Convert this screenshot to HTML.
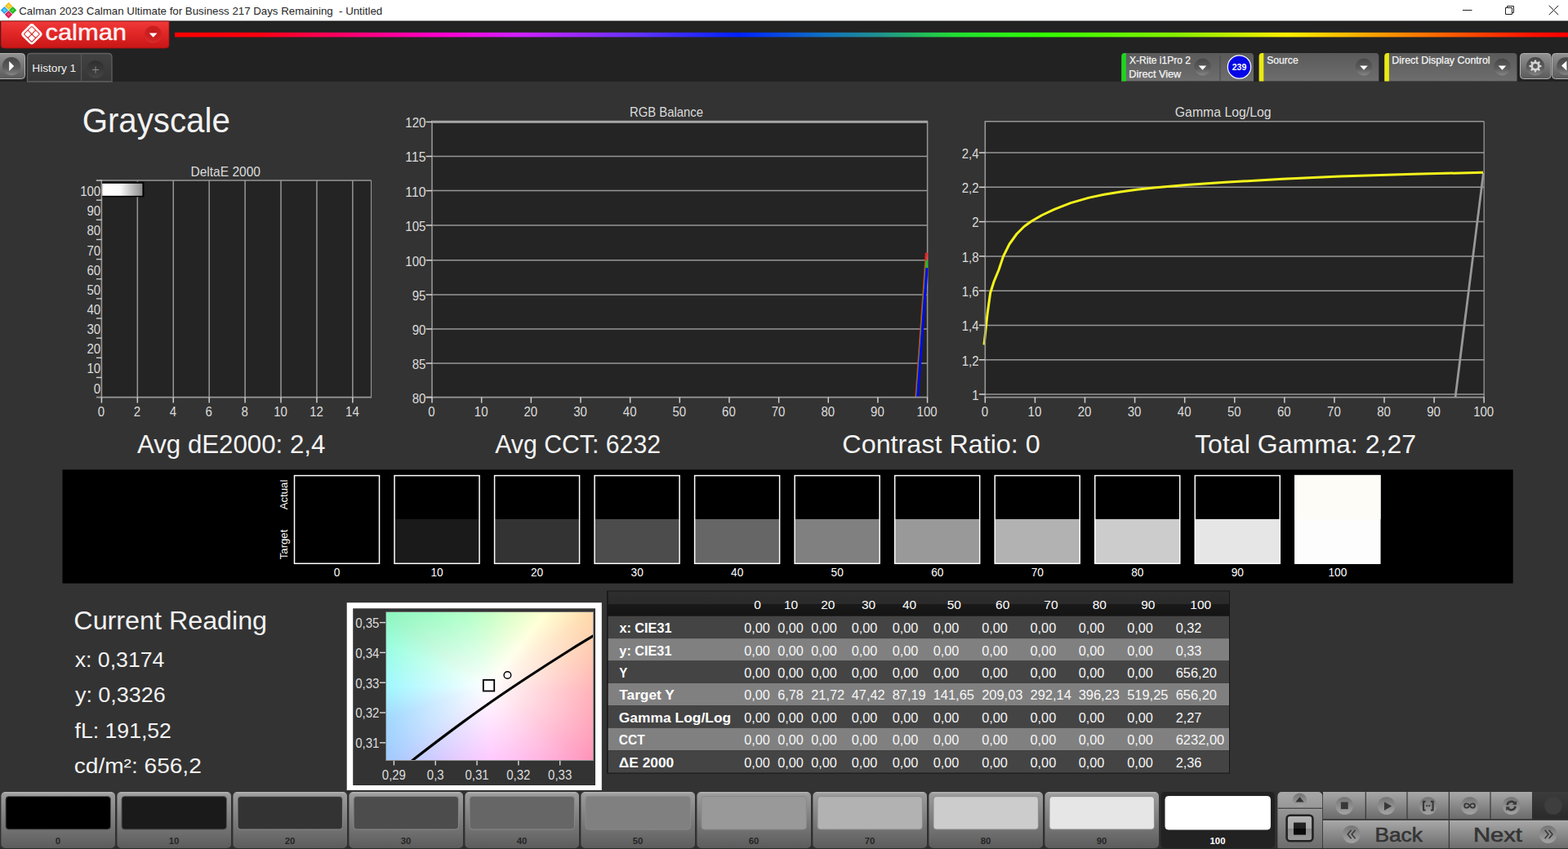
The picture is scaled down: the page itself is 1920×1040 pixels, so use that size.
<!DOCTYPE html>
<html lang="en"><head><meta charset="utf-8"><title>Calman 2023 - Grayscale</title>
<style>
html,body{margin:0;padding:0;background:#333;}
body{width:1920px;height:1040px;overflow:hidden;position:relative;font-family:"Liberation Sans",sans-serif;}
svg{position:absolute;left:0;top:0;display:block;font-family:"Liberation Sans",sans-serif;}
#cie{position:absolute;left:473.3px;top:750.3px;width:252.7px;height:180.7px;background:radial-gradient(circle at 124.5px 89.9px, rgba(255,255,255,1) 0, rgba(255,255,255,0) 175px), conic-gradient(from 0deg at 124.5px 89.9px, rgb(140,255,140) 0.6deg, rgb(202,255,155) 21.5deg, rgb(255,255,184) 38.8deg, rgb(255,212,159) 55.4deg, rgb(255,184,153) 73.2deg, rgb(255,149,160) 94.7deg, rgb(255,134,177) 125.5deg, rgb(255,139,217) 150.2deg, rgb(255,151,255) 178.0deg, rgb(192,167,255) 211.5deg, rgb(148,193,255) 233.3deg, rgb(128,203,255) 251.9deg, rgb(121,245,255) 269.6deg, rgb(120,255,214) 291.6deg, rgb(124,244,181) 305.8deg, rgb(105,250,162) 324.3deg, rgb(108,255,152) 343.4deg, rgb(140,255,140) 360.0deg);}
</style></head><body>
<svg id="main" width="1920" height="1040" viewBox="0 0 1920 1040">
<defs>
<linearGradient id="gRed" x1="0" y1="0" x2="0" y2="1"><stop offset="0" stop-color="#f03a3a"/><stop offset="0.45" stop-color="#e22626"/><stop offset="1" stop-color="#c81616"/></linearGradient>
<radialGradient id="gRedC" cx="0.5" cy="0.35" r="0.7"><stop offset="0" stop-color="#c31a1a"/><stop offset="0.7" stop-color="#d02222"/><stop offset="1" stop-color="#e03535"/></radialGradient>
<linearGradient id="gRain" x1="214" y1="0" x2="1920" y2="0" gradientUnits="userSpaceOnUse">
<stop offset="0" stop-color="#ff0000"/><stop offset="0.06" stop-color="#ff0010"/><stop offset="0.12" stop-color="#ff0066"/><stop offset="0.19" stop-color="#ff00cc"/><stop offset="0.25" stop-color="#cc22ff"/><stop offset="0.33" stop-color="#6633ff"/><stop offset="0.405" stop-color="#0022ff"/><stop offset="0.465" stop-color="#1070c0"/><stop offset="0.505" stop-color="#209090"/><stop offset="0.56" stop-color="#22dd33"/><stop offset="0.625" stop-color="#33ff00"/><stop offset="0.72" stop-color="#88ee00"/><stop offset="0.80" stop-color="#ffee00"/><stop offset="0.88" stop-color="#ff8800"/><stop offset="0.975" stop-color="#ff1100"/><stop offset="1" stop-color="#ff0000"/></linearGradient>
<linearGradient id="gBtn" x1="0" y1="0" x2="0" y2="1"><stop offset="0" stop-color="#929292"/><stop offset="1" stop-color="#5a5a5a"/></linearGradient>
<linearGradient id="gPanel" x1="0" y1="0" x2="0" y2="1"><stop offset="0" stop-color="#5a5a5a"/><stop offset="1" stop-color="#6e6e6e"/></linearGradient>
<linearGradient id="gPlus" x1="0" y1="0" x2="0" y2="1"><stop offset="0" stop-color="#2e2e2e"/><stop offset="1" stop-color="#454545"/></linearGradient>
<linearGradient id="gTab" x1="0" y1="0" x2="0" y2="1"><stop offset="0" stop-color="#424242"/><stop offset="1" stop-color="#363636"/></linearGradient>
<radialGradient id="gDD" cx="0.5" cy="0.3" r="0.75"><stop offset="0" stop-color="#4a4a4a"/><stop offset="0.8" stop-color="#5a5a5a"/><stop offset="1" stop-color="#6a6a6a"/></radialGradient>
<linearGradient id="gDDl" x1="0" y1="0" x2="0" y2="1"><stop offset="0" stop-color="#474747"/><stop offset="0.6" stop-color="#5c5c5c"/><stop offset="1" stop-color="#868686"/></linearGradient>
<linearGradient id="gBar" x1="0" y1="0" x2="1" y2="0"><stop offset="0" stop-color="#ffffff"/><stop offset="0.45" stop-color="#fafafa"/><stop offset="1" stop-color="#8c8c8c"/></linearGradient>
<linearGradient id="gHdr" x1="0" y1="0" x2="0" y2="1"><stop offset="0" stop-color="#2e2e2e"/><stop offset="0.5" stop-color="#2a2a2a"/><stop offset="0.5" stop-color="#191919"/><stop offset="1" stop-color="#141414"/></linearGradient>
<linearGradient id="gBB" x1="0" y1="0" x2="0" y2="1"><stop offset="0" stop-color="#a6a6a6"/><stop offset="0.06" stop-color="#9a9a9a"/><stop offset="1" stop-color="#5c5c5c"/></linearGradient>
<linearGradient id="gBB2" x1="0" y1="0" x2="0" y2="1"><stop offset="0" stop-color="#a8a8a8"/><stop offset="1" stop-color="#6a6a6a"/></linearGradient>
<linearGradient id="gBBc" x1="0" y1="0" x2="0" y2="1"><stop offset="0" stop-color="#747474"/><stop offset="1" stop-color="#a4a4a4"/></linearGradient>
<linearGradient id="gBBd" x1="0" y1="0" x2="0" y2="1"><stop offset="0" stop-color="#3c3c3c"/><stop offset="1" stop-color="#2a2a2a"/></linearGradient>
<linearGradient id="gSq" x1="0" y1="0" x2="0" y2="1"><stop offset="0" stop-color="#b4b4b4"/><stop offset="0.5" stop-color="#a8a8a8"/><stop offset="0.5" stop-color="#8c8c8c"/><stop offset="1" stop-color="#9a9a9a"/></linearGradient>
</defs>
<rect x="0.00" y="0.00" width="1920.00" height="1040.00" fill="#333333"/>
<rect x="0.00" y="0.00" width="1920.00" height="26.00" fill="#ffffff"/>
<rect x="0.00" y="26.00" width="1920.00" height="74.00" fill="#222222"/>
<line x1="0.00" y1="26.00" x2="1920.00" y2="26.00" stroke="#141414" stroke-width="1.00"/>
<path d="M10.60,2.70 l4.70,4.70 l-4.70,4.70 l-4.70,-4.70Z" fill="#f2c21a"/><path d="M10.60,5.40 l2.20,2.20 l-2.20,2.20 l-2.20,-2.20Z" fill="#f8d648"/><path d="M5.40,7.90 l4.70,4.70 l-4.70,4.70 l-4.70,-4.70Z" fill="#2aa6ea"/><path d="M5.60,10.40 l2.20,2.20 l-2.20,2.20 l-2.20,-2.20Z" fill="#5fd0f6"/><path d="M15.60,7.90 l4.70,4.70 l-4.70,4.70 l-4.70,-4.70Z" fill="#22b422"/><path d="M15.40,10.40 l2.20,2.20 l-2.20,2.20 l-2.20,-2.20Z" fill="#40dc40"/><path d="M10.50,13.00 l4.70,4.70 l-4.70,4.70 l-4.70,-4.70Z" fill="#d81e56"/><path d="M10.50,15.30 l2.20,2.20 l-2.20,2.20 l-2.20,-2.20Z" fill="#f04a7a"/>
<text x="23.23" y="18.00" font-size="12.80" textLength="444.93" lengthAdjust="spacingAndGlyphs" fill="#262626" style="white-space:pre">Calman 2023 Calman Ultimate for Business 217 Days Remaining  - Untitled</text>
<line x1="1791.00" y1="12.50" x2="1802.50" y2="12.50" stroke="#222" stroke-width="1.00"/>
<path d="M1843.5,9.5 h8 v8 h-8Z M1845.5,9.5 v-2 h8 v8 h-2" fill="none" stroke="#222" stroke-width="1"/>
<path d="M1896.8,6.8 L1908.2,18.2 M1908.2,6.8 L1896.8,18.2" stroke="#222" stroke-width="1.0" fill="none"/>
<path d="M1,26 H207 V55 Q207,59 203,59 H5 Q1,59 1,55Z" fill="url(#gRed)" stroke="#9c1010" stroke-width="0.8"/>
<g transform="translate(38.9,41.8) rotate(45) scale(1.06)"><rect x="-8.2" y="-8.2" width="16.4" height="16.4" rx="2.6" fill="none" stroke="#ffffff" stroke-width="2.5"/><rect x="-6.0" y="-6.0" width="5.5" height="5.5" rx="0.8" fill="#ffffff"/><rect x="0.5" y="-6.0" width="5.5" height="5.5" rx="0.8" fill="#ffffff"/><rect x="-6.0" y="0.5" width="5.5" height="5.5" rx="0.8" fill="#ffffff"/><rect x="0.5" y="0.5" width="5.5" height="5.5" rx="0.8" fill="#ffffff"/></g>
<text x="55.49" y="49.30" font-size="27.80" textLength="99.52" lengthAdjust="spacingAndGlyphs" fill="#fff2f2" stroke="#fff2f2" stroke-width="0.45" stroke-linejoin="round">calman</text>
<circle cx="187.5" cy="42" r="10.6" fill="url(#gRedC)"/>
<path d="M182.7,40.4 h9.8 l-4.9,5.4Z" fill="#ffffff"/>
<rect x="214.00" y="39.80" width="1706.00" height="5.60" fill="url(#gRain)"/>
<path d="M-2,65.5 H26.5 Q30.5,65.5 30.5,69.5 V92.5 Q30.5,96.5 26.5,96.5 H-2Z" fill="url(#gBtn)" stroke="#b0b0b0" stroke-width="1"/>
<circle cx="14" cy="81.2" r="11.2" fill="url(#gDDl)"/>
<path d="M11.2,75 L17.2,81 L11.2,87Z" fill="#ffffff"/>
<path d="M33.5,100 V70 Q33.5,65.5 38,65.5 H132.5 Q137,65.5 137,70 V100Z" fill="url(#gTab)" stroke="#606060" stroke-width="1.3"/>
<line x1="99.50" y1="66.00" x2="99.50" y2="100.00" stroke="#5a5a5a" stroke-width="1.00"/>
<text x="39.28" y="88.30" font-size="13.50" textLength="53.89" lengthAdjust="spacingAndGlyphs" fill="#f0f0f0">History 1</text>
<circle cx="117" cy="85" r="10.8" fill="url(#gPlus)"/>
<path d="M113,85.5 h8 M117,81.5 v8" stroke="#8a8a8a" stroke-width="1" fill="none"/>
<path d="M1373.3,99.5 V69 Q1373.3,65 1377.3,65 H1531.0 Q1535.0,65 1535.0,69 V99.5Z" fill="url(#gPanel)"/>
<path d="M1373.3,99.5 V69 Q1373.3,65 1377.3,65 H1378.9 V99.5Z" fill="#1fd31f"/>
<text x="1383.03" y="78.30" font-size="12.70" textLength="74.88" lengthAdjust="spacingAndGlyphs" fill="#f4f4f4" stroke="#f4f4f4" stroke-width="0.25">X-Rite i1Pro 2</text>
<text x="1382.26" y="94.90" font-size="12.70" textLength="64.01" lengthAdjust="spacingAndGlyphs" fill="#f4f4f4" stroke="#f4f4f4" stroke-width="0.25">Direct View</text>
<circle cx="1472.5" cy="82" r="10.4" fill="url(#gDDl)"/>
<path d="M1467.7,80.6 h9.6 l-4.8,5.2Z" fill="#ffffff"/>
<line x1="1494.00" y1="68.00" x2="1494.00" y2="99.50" stroke="#484848" stroke-width="1.00"/>
<circle cx="1517.5" cy="82" r="14.2" fill="#0505e6" stroke="#ffffff" stroke-width="1.2"/>
<text x="1517.50" y="86.00" font-size="11.50" text-anchor="middle" textLength="17.50" lengthAdjust="spacingAndGlyphs" font-weight="bold" fill="#ffffff">239</text>
<path d="M1541.7,99.5 V69 Q1541.7,65 1545.7,65 H1684.3 Q1688.3,65 1688.3,69 V99.5Z" fill="url(#gPanel)"/>
<path d="M1541.7,99.5 V69 Q1541.7,65 1545.7,65 H1547.3 V99.5Z" fill="#eaea10"/>
<text x="1551.15" y="78.30" font-size="12.70" textLength="38.59" lengthAdjust="spacingAndGlyphs" fill="#f4f4f4" stroke="#f4f4f4" stroke-width="0.25">Source</text>
<circle cx="1670.0" cy="82" r="10.4" fill="url(#gDDl)"/>
<path d="M1665.2,80.6 h9.6 l-4.8,5.2Z" fill="#ffffff"/>
<path d="M1695.3,99.5 V69 Q1695.3,65 1699.3,65 H1853.5 Q1857.5,65 1857.5,69 V99.5Z" fill="url(#gPanel)"/>
<path d="M1695.3,99.5 V69 Q1695.3,65 1699.3,65 H1700.9 V99.5Z" fill="#eaea10"/>
<text x="1704.28" y="78.30" font-size="12.70" textLength="120.35" lengthAdjust="spacingAndGlyphs" fill="#f4f4f4" stroke="#f4f4f4" stroke-width="0.25">Direct Display Control</text>
<circle cx="1839.5" cy="82" r="10.4" fill="url(#gDDl)"/>
<path d="M1834.7,80.6 h9.6 l-4.8,5.2Z" fill="#ffffff"/>
<rect x="1861.50" y="65.50" width="37.50" height="31.00" rx="4.00" fill="url(#gBtn)" stroke="#b0b0b0" stroke-width="1"/>
<circle cx="1880" cy="81.3" r="11.2" fill="url(#gDDl)"/>
<path d="M1884.40,79.10 L1887.60,80.20 L1887.60,81.80 L1884.40,82.90 Z" fill="#d4d4d4"/><path d="M1884.45,82.77 L1885.94,85.81 L1884.81,86.94 L1881.77,85.45 Z" fill="#d4d4d4"/><path d="M1881.90,85.40 L1880.80,88.60 L1879.20,88.60 L1878.10,85.40 Z" fill="#d4d4d4"/><path d="M1878.23,85.45 L1875.19,86.94 L1874.06,85.81 L1875.55,82.77 Z" fill="#d4d4d4"/><path d="M1875.60,82.90 L1872.40,81.80 L1872.40,80.20 L1875.60,79.10 Z" fill="#d4d4d4"/><path d="M1875.55,79.23 L1874.06,76.19 L1875.19,75.06 L1878.23,76.55 Z" fill="#d4d4d4"/><path d="M1878.10,76.60 L1879.20,73.40 L1880.80,73.40 L1881.90,76.60 Z" fill="#d4d4d4"/><path d="M1881.77,76.55 L1884.81,75.06 L1885.94,76.19 L1884.45,79.23 Z" fill="#d4d4d4"/>
<circle cx="1880" cy="81" r="4.1" fill="none" stroke="#d4d4d4" stroke-width="2.3"/>
<rect x="1900.50" y="65.50" width="30.00" height="31.00" rx="4.00" fill="url(#gBtn)" stroke="#b0b0b0" stroke-width="1"/>
<circle cx="1917" cy="81" r="10.8" fill="url(#gDDl)"/>
<path d="M1918.4,74.5 L1912,80.5 L1918.4,86.5Z" fill="#ffffff"/>
<text x="100.68" y="161.80" font-size="42.80" textLength="181.11" lengthAdjust="spacingAndGlyphs" fill="#f2f2f2">Grayscale</text>
<rect x="124.40" y="221.00" width="330.10" height="265.60" fill="#242424"/>
<line x1="168.32" y1="221.00" x2="168.32" y2="486.60" stroke="#979797" stroke-width="1.50"/>
<line x1="212.24" y1="221.00" x2="212.24" y2="486.60" stroke="#979797" stroke-width="1.50"/>
<line x1="256.16" y1="221.00" x2="256.16" y2="486.60" stroke="#979797" stroke-width="1.50"/>
<line x1="300.08" y1="221.00" x2="300.08" y2="486.60" stroke="#979797" stroke-width="1.50"/>
<line x1="344.00" y1="221.00" x2="344.00" y2="486.60" stroke="#979797" stroke-width="1.50"/>
<line x1="387.92" y1="221.00" x2="387.92" y2="486.60" stroke="#979797" stroke-width="1.50"/>
<line x1="431.84" y1="221.00" x2="431.84" y2="486.60" stroke="#979797" stroke-width="1.50"/>
<line x1="124.40" y1="221.00" x2="454.50" y2="221.00" stroke="#979797" stroke-width="1.50"/>
<line x1="454.50" y1="221.00" x2="454.50" y2="486.60" stroke="#979797" stroke-width="1.10"/>
<line x1="124.40" y1="220.30" x2="124.40" y2="487.40" stroke="#979797" stroke-width="1.60"/>
<line x1="117.90" y1="486.60" x2="455.00" y2="486.60" stroke="#979797" stroke-width="1.75"/>
<line x1="117.90" y1="221.00" x2="124.40" y2="221.00" stroke="#d0d0d0" stroke-width="1.40"/>
<text x="123.20" y="240.07" font-size="15.70" text-anchor="end" textLength="25.05" lengthAdjust="spacingAndGlyphs" fill="#dcdcdc">100</text>
<line x1="117.90" y1="245.15" x2="124.40" y2="245.15" stroke="#d0d0d0" stroke-width="1.40"/>
<text x="123.20" y="264.22" font-size="15.70" text-anchor="end" textLength="16.70" lengthAdjust="spacingAndGlyphs" fill="#dcdcdc">90</text>
<line x1="117.90" y1="269.29" x2="124.40" y2="269.29" stroke="#d0d0d0" stroke-width="1.40"/>
<text x="123.20" y="288.36" font-size="15.70" text-anchor="end" textLength="16.70" lengthAdjust="spacingAndGlyphs" fill="#dcdcdc">80</text>
<line x1="117.90" y1="293.44" x2="124.40" y2="293.44" stroke="#d0d0d0" stroke-width="1.40"/>
<text x="123.20" y="312.51" font-size="15.70" text-anchor="end" textLength="16.70" lengthAdjust="spacingAndGlyphs" fill="#dcdcdc">70</text>
<line x1="117.90" y1="317.58" x2="124.40" y2="317.58" stroke="#d0d0d0" stroke-width="1.40"/>
<text x="123.20" y="336.65" font-size="15.70" text-anchor="end" textLength="16.70" lengthAdjust="spacingAndGlyphs" fill="#dcdcdc">60</text>
<line x1="117.90" y1="341.73" x2="124.40" y2="341.73" stroke="#d0d0d0" stroke-width="1.40"/>
<text x="123.20" y="360.80" font-size="15.70" text-anchor="end" textLength="16.70" lengthAdjust="spacingAndGlyphs" fill="#dcdcdc">50</text>
<line x1="117.90" y1="365.87" x2="124.40" y2="365.87" stroke="#d0d0d0" stroke-width="1.40"/>
<text x="123.20" y="384.95" font-size="15.70" text-anchor="end" textLength="16.70" lengthAdjust="spacingAndGlyphs" fill="#dcdcdc">40</text>
<line x1="117.90" y1="390.02" x2="124.40" y2="390.02" stroke="#d0d0d0" stroke-width="1.40"/>
<text x="123.20" y="409.09" font-size="15.70" text-anchor="end" textLength="16.70" lengthAdjust="spacingAndGlyphs" fill="#dcdcdc">30</text>
<line x1="117.90" y1="414.16" x2="124.40" y2="414.16" stroke="#d0d0d0" stroke-width="1.40"/>
<text x="123.20" y="433.24" font-size="15.70" text-anchor="end" textLength="16.70" lengthAdjust="spacingAndGlyphs" fill="#dcdcdc">20</text>
<line x1="117.90" y1="438.31" x2="124.40" y2="438.31" stroke="#d0d0d0" stroke-width="1.40"/>
<text x="123.20" y="457.38" font-size="15.70" text-anchor="end" textLength="16.70" lengthAdjust="spacingAndGlyphs" fill="#dcdcdc">10</text>
<line x1="117.90" y1="462.45" x2="124.40" y2="462.45" stroke="#d0d0d0" stroke-width="1.40"/>
<text x="123.20" y="481.53" font-size="15.70" text-anchor="end" textLength="8.35" lengthAdjust="spacingAndGlyphs" fill="#dcdcdc">0</text>
<line x1="124.40" y1="486.60" x2="124.40" y2="493.60" stroke="#d0d0d0" stroke-width="1.50"/>
<text x="124.00" y="510.40" font-size="15.70" text-anchor="middle" textLength="8.35" lengthAdjust="spacingAndGlyphs" fill="#dcdcdc">0</text>
<line x1="168.32" y1="486.60" x2="168.32" y2="493.60" stroke="#d0d0d0" stroke-width="1.50"/>
<text x="167.92" y="510.40" font-size="15.70" text-anchor="middle" textLength="8.35" lengthAdjust="spacingAndGlyphs" fill="#dcdcdc">2</text>
<line x1="212.24" y1="486.60" x2="212.24" y2="493.60" stroke="#d0d0d0" stroke-width="1.50"/>
<text x="211.84" y="510.40" font-size="15.70" text-anchor="middle" textLength="8.35" lengthAdjust="spacingAndGlyphs" fill="#dcdcdc">4</text>
<line x1="256.16" y1="486.60" x2="256.16" y2="493.60" stroke="#d0d0d0" stroke-width="1.50"/>
<text x="255.76" y="510.40" font-size="15.70" text-anchor="middle" textLength="8.35" lengthAdjust="spacingAndGlyphs" fill="#dcdcdc">6</text>
<line x1="300.08" y1="486.60" x2="300.08" y2="493.60" stroke="#d0d0d0" stroke-width="1.50"/>
<text x="299.68" y="510.40" font-size="15.70" text-anchor="middle" textLength="8.35" lengthAdjust="spacingAndGlyphs" fill="#dcdcdc">8</text>
<line x1="344.00" y1="486.60" x2="344.00" y2="493.60" stroke="#d0d0d0" stroke-width="1.50"/>
<text x="343.60" y="510.40" font-size="15.70" text-anchor="middle" textLength="16.70" lengthAdjust="spacingAndGlyphs" fill="#dcdcdc">10</text>
<line x1="387.92" y1="486.60" x2="387.92" y2="493.60" stroke="#d0d0d0" stroke-width="1.50"/>
<text x="387.52" y="510.40" font-size="15.70" text-anchor="middle" textLength="16.70" lengthAdjust="spacingAndGlyphs" fill="#dcdcdc">12</text>
<line x1="431.84" y1="486.60" x2="431.84" y2="493.60" stroke="#d0d0d0" stroke-width="1.50"/>
<text x="431.44" y="510.40" font-size="15.70" text-anchor="middle" textLength="16.70" lengthAdjust="spacingAndGlyphs" fill="#dcdcdc">14</text>
<rect x="125.20" y="222.70" width="51.20" height="18.60" fill="#000000"/>
<rect x="125.20" y="224.80" width="49.20" height="15.00" fill="url(#gBar)"/>
<text x="233.53" y="215.60" font-size="16.20" textLength="85.38" lengthAdjust="spacingAndGlyphs" fill="#dcdcdc">DeltaE 2000</text>
<rect x="529.00" y="149.40" width="606.60" height="337.20" fill="#242424"/>
<line x1="529.00" y1="191.50" x2="1135.60" y2="191.50" stroke="#979797" stroke-width="1.50"/>
<line x1="529.00" y1="233.60" x2="1135.60" y2="233.60" stroke="#979797" stroke-width="1.50"/>
<line x1="529.00" y1="276.00" x2="1135.60" y2="276.00" stroke="#979797" stroke-width="1.50"/>
<line x1="529.00" y1="318.80" x2="1135.60" y2="318.80" stroke="#979797" stroke-width="1.50"/>
<line x1="529.00" y1="361.00" x2="1135.60" y2="361.00" stroke="#979797" stroke-width="1.50"/>
<line x1="529.00" y1="403.00" x2="1135.60" y2="403.00" stroke="#979797" stroke-width="1.50"/>
<line x1="529.00" y1="445.00" x2="1135.60" y2="445.00" stroke="#979797" stroke-width="1.50"/>
<line x1="528.20" y1="149.20" x2="1136.20" y2="149.20" stroke="#a6a6a6" stroke-width="3.00"/>
<line x1="1135.60" y1="149.40" x2="1135.60" y2="486.60" stroke="#979797" stroke-width="1.50"/>
<clipPath id="cpR"><rect x="529.0" y="149.4" width="607.6" height="337.2"/></clipPath>
<g clip-path="url(#cpR)" fill="none"><line x1="1073.9" y1="1161.0" x2="1134.4" y2="309.6" stroke="#ee2222" stroke-width="3"/><line x1="1074.4" y1="1161.0" x2="1134.7" y2="318.8" stroke="#22bb22" stroke-width="3"/><line x1="1074.9" y1="1161.0" x2="1135.0" y2="328.1" stroke="#0808e8" stroke-width="3.2"/></g>
<line x1="529.00" y1="147.80" x2="529.00" y2="487.40" stroke="#979797" stroke-width="1.60"/>
<line x1="521.50" y1="486.60" x2="1136.30" y2="486.60" stroke="#979797" stroke-width="1.75"/>
<line x1="521.50" y1="149.40" x2="529.00" y2="149.40" stroke="#d8d8d8" stroke-width="1.50"/>
<text x="521.40" y="156.30" font-size="15.70" text-anchor="end" textLength="25.05" lengthAdjust="spacingAndGlyphs" fill="#dcdcdc">120</text>
<line x1="521.50" y1="191.50" x2="529.00" y2="191.50" stroke="#d8d8d8" stroke-width="1.50"/>
<text x="521.40" y="198.40" font-size="15.70" text-anchor="end" textLength="25.05" lengthAdjust="spacingAndGlyphs" fill="#dcdcdc">115</text>
<line x1="521.50" y1="233.60" x2="529.00" y2="233.60" stroke="#d8d8d8" stroke-width="1.50"/>
<text x="521.40" y="240.50" font-size="15.70" text-anchor="end" textLength="25.05" lengthAdjust="spacingAndGlyphs" fill="#dcdcdc">110</text>
<line x1="521.50" y1="276.00" x2="529.00" y2="276.00" stroke="#d8d8d8" stroke-width="1.50"/>
<text x="521.40" y="282.90" font-size="15.70" text-anchor="end" textLength="25.05" lengthAdjust="spacingAndGlyphs" fill="#dcdcdc">105</text>
<line x1="521.50" y1="318.80" x2="529.00" y2="318.80" stroke="#d8d8d8" stroke-width="1.50"/>
<text x="521.40" y="325.70" font-size="15.70" text-anchor="end" textLength="25.05" lengthAdjust="spacingAndGlyphs" fill="#dcdcdc">100</text>
<line x1="521.50" y1="361.00" x2="529.00" y2="361.00" stroke="#d8d8d8" stroke-width="1.50"/>
<text x="521.40" y="367.90" font-size="15.70" text-anchor="end" textLength="16.70" lengthAdjust="spacingAndGlyphs" fill="#dcdcdc">95</text>
<line x1="521.50" y1="403.00" x2="529.00" y2="403.00" stroke="#d8d8d8" stroke-width="1.50"/>
<text x="521.40" y="409.90" font-size="15.70" text-anchor="end" textLength="16.70" lengthAdjust="spacingAndGlyphs" fill="#dcdcdc">90</text>
<line x1="521.50" y1="445.00" x2="529.00" y2="445.00" stroke="#d8d8d8" stroke-width="1.50"/>
<text x="521.40" y="451.90" font-size="15.70" text-anchor="end" textLength="16.70" lengthAdjust="spacingAndGlyphs" fill="#dcdcdc">85</text>
<line x1="521.50" y1="486.60" x2="529.00" y2="486.60" stroke="#d8d8d8" stroke-width="1.50"/>
<text x="521.40" y="493.50" font-size="15.70" text-anchor="end" textLength="16.70" lengthAdjust="spacingAndGlyphs" fill="#dcdcdc">80</text>
<line x1="529.00" y1="486.60" x2="529.00" y2="493.60" stroke="#d0d0d0" stroke-width="1.50"/>
<text x="528.50" y="510.40" font-size="15.70" text-anchor="middle" textLength="8.35" lengthAdjust="spacingAndGlyphs" fill="#dcdcdc">0</text>
<line x1="589.66" y1="486.60" x2="589.66" y2="493.60" stroke="#d0d0d0" stroke-width="1.50"/>
<text x="589.16" y="510.40" font-size="15.70" text-anchor="middle" textLength="16.70" lengthAdjust="spacingAndGlyphs" fill="#dcdcdc">10</text>
<line x1="650.32" y1="486.60" x2="650.32" y2="493.60" stroke="#d0d0d0" stroke-width="1.50"/>
<text x="649.82" y="510.40" font-size="15.70" text-anchor="middle" textLength="16.70" lengthAdjust="spacingAndGlyphs" fill="#dcdcdc">20</text>
<line x1="710.98" y1="486.60" x2="710.98" y2="493.60" stroke="#d0d0d0" stroke-width="1.50"/>
<text x="710.48" y="510.40" font-size="15.70" text-anchor="middle" textLength="16.70" lengthAdjust="spacingAndGlyphs" fill="#dcdcdc">30</text>
<line x1="771.64" y1="486.60" x2="771.64" y2="493.60" stroke="#d0d0d0" stroke-width="1.50"/>
<text x="771.14" y="510.40" font-size="15.70" text-anchor="middle" textLength="16.70" lengthAdjust="spacingAndGlyphs" fill="#dcdcdc">40</text>
<line x1="832.30" y1="486.60" x2="832.30" y2="493.60" stroke="#d0d0d0" stroke-width="1.50"/>
<text x="831.80" y="510.40" font-size="15.70" text-anchor="middle" textLength="16.70" lengthAdjust="spacingAndGlyphs" fill="#dcdcdc">50</text>
<line x1="892.96" y1="486.60" x2="892.96" y2="493.60" stroke="#d0d0d0" stroke-width="1.50"/>
<text x="892.46" y="510.40" font-size="15.70" text-anchor="middle" textLength="16.70" lengthAdjust="spacingAndGlyphs" fill="#dcdcdc">60</text>
<line x1="953.62" y1="486.60" x2="953.62" y2="493.60" stroke="#d0d0d0" stroke-width="1.50"/>
<text x="953.12" y="510.40" font-size="15.70" text-anchor="middle" textLength="16.70" lengthAdjust="spacingAndGlyphs" fill="#dcdcdc">70</text>
<line x1="1014.28" y1="486.60" x2="1014.28" y2="493.60" stroke="#d0d0d0" stroke-width="1.50"/>
<text x="1013.78" y="510.40" font-size="15.70" text-anchor="middle" textLength="16.70" lengthAdjust="spacingAndGlyphs" fill="#dcdcdc">80</text>
<line x1="1074.94" y1="486.60" x2="1074.94" y2="493.60" stroke="#d0d0d0" stroke-width="1.50"/>
<text x="1074.44" y="510.40" font-size="15.70" text-anchor="middle" textLength="16.70" lengthAdjust="spacingAndGlyphs" fill="#dcdcdc">90</text>
<line x1="1135.60" y1="486.60" x2="1135.60" y2="493.60" stroke="#d0d0d0" stroke-width="1.50"/>
<text x="1135.10" y="510.40" font-size="15.70" text-anchor="middle" textLength="25.05" lengthAdjust="spacingAndGlyphs" fill="#dcdcdc">100</text>
<text x="771.08" y="142.60" font-size="16.20" textLength="89.88" lengthAdjust="spacingAndGlyphs" fill="#dcdcdc">RGB Balance</text>
<rect x="1206.30" y="148.80" width="610.90" height="337.80" fill="#242424"/>
<line x1="1206.30" y1="483.00" x2="1817.20" y2="483.00" stroke="#979797" stroke-width="1.50"/>
<line x1="1206.30" y1="440.72" x2="1817.20" y2="440.72" stroke="#979797" stroke-width="1.50"/>
<line x1="1206.30" y1="398.44" x2="1817.20" y2="398.44" stroke="#979797" stroke-width="1.50"/>
<line x1="1206.30" y1="356.16" x2="1817.20" y2="356.16" stroke="#979797" stroke-width="1.50"/>
<line x1="1206.30" y1="313.88" x2="1817.20" y2="313.88" stroke="#979797" stroke-width="1.50"/>
<line x1="1206.30" y1="271.60" x2="1817.20" y2="271.60" stroke="#979797" stroke-width="1.50"/>
<line x1="1206.30" y1="229.32" x2="1817.20" y2="229.32" stroke="#979797" stroke-width="1.50"/>
<line x1="1206.30" y1="187.04" x2="1817.20" y2="187.04" stroke="#979797" stroke-width="1.50"/>
<line x1="1206.30" y1="148.80" x2="1817.20" y2="148.80" stroke="#979797" stroke-width="1.50"/>
<line x1="1817.20" y1="148.80" x2="1817.20" y2="486.60" stroke="#979797" stroke-width="1.30"/>
<line x1="1782.00" y1="487.00" x2="1816.40" y2="212.00" stroke="#989898" stroke-width="2.80"/>
<polyline points="1205.0,422.3 1209.0,385.0 1212.6,359.0 1217.0,345.0 1223.0,330.5 1228.6,313.8 1236.0,299.0 1245.0,286.5 1254.0,277.5 1263.0,271.0 1276.0,263.5 1291.2,256.3 1311.0,248.6 1333.6,242.1 1352.0,238.2 1372.0,235.1 1392.0,232.3 1412.4,230.0 1452.8,226.4 1500.0,223.3 1570.0,219.2 1641.3,215.9 1730.0,213.2 1816.0,211.3" fill="none" stroke="#f4f41c" stroke-width="3" stroke-linejoin="round" stroke-linecap="butt"/>
<line x1="1206.30" y1="148.10" x2="1206.30" y2="487.40" stroke="#979797" stroke-width="1.60"/>
<line x1="1205.50" y1="486.60" x2="1817.80" y2="486.60" stroke="#979797" stroke-width="1.75"/>
<line x1="1198.80" y1="483.00" x2="1206.30" y2="483.00" stroke="#d8d8d8" stroke-width="1.50"/>
<text x="1198.60" y="489.80" font-size="15.70" text-anchor="end" textLength="8.35" lengthAdjust="spacingAndGlyphs" fill="#dcdcdc">1</text>
<line x1="1198.80" y1="440.72" x2="1206.30" y2="440.72" stroke="#d8d8d8" stroke-width="1.50"/>
<text x="1198.60" y="447.52" font-size="15.70" text-anchor="end" textLength="20.80" lengthAdjust="spacingAndGlyphs" fill="#dcdcdc">1,2</text>
<line x1="1198.80" y1="398.44" x2="1206.30" y2="398.44" stroke="#d8d8d8" stroke-width="1.50"/>
<text x="1198.60" y="405.24" font-size="15.70" text-anchor="end" textLength="20.80" lengthAdjust="spacingAndGlyphs" fill="#dcdcdc">1,4</text>
<line x1="1198.80" y1="356.16" x2="1206.30" y2="356.16" stroke="#d8d8d8" stroke-width="1.50"/>
<text x="1198.60" y="362.96" font-size="15.70" text-anchor="end" textLength="20.80" lengthAdjust="spacingAndGlyphs" fill="#dcdcdc">1,6</text>
<line x1="1198.80" y1="313.88" x2="1206.30" y2="313.88" stroke="#d8d8d8" stroke-width="1.50"/>
<text x="1198.60" y="320.68" font-size="15.70" text-anchor="end" textLength="20.80" lengthAdjust="spacingAndGlyphs" fill="#dcdcdc">1,8</text>
<line x1="1198.80" y1="271.60" x2="1206.30" y2="271.60" stroke="#d8d8d8" stroke-width="1.50"/>
<text x="1198.60" y="278.40" font-size="15.70" text-anchor="end" textLength="8.35" lengthAdjust="spacingAndGlyphs" fill="#dcdcdc">2</text>
<line x1="1198.80" y1="229.32" x2="1206.30" y2="229.32" stroke="#d8d8d8" stroke-width="1.50"/>
<text x="1198.60" y="236.12" font-size="15.70" text-anchor="end" textLength="20.80" lengthAdjust="spacingAndGlyphs" fill="#dcdcdc">2,2</text>
<line x1="1198.80" y1="187.04" x2="1206.30" y2="187.04" stroke="#d8d8d8" stroke-width="1.50"/>
<text x="1198.60" y="193.84" font-size="15.70" text-anchor="end" textLength="20.80" lengthAdjust="spacingAndGlyphs" fill="#dcdcdc">2,4</text>
<line x1="1206.30" y1="486.60" x2="1206.30" y2="493.60" stroke="#d0d0d0" stroke-width="1.50"/>
<text x="1205.80" y="510.40" font-size="15.70" text-anchor="middle" textLength="8.35" lengthAdjust="spacingAndGlyphs" fill="#dcdcdc">0</text>
<line x1="1267.39" y1="486.60" x2="1267.39" y2="493.60" stroke="#d0d0d0" stroke-width="1.50"/>
<text x="1266.89" y="510.40" font-size="15.70" text-anchor="middle" textLength="16.70" lengthAdjust="spacingAndGlyphs" fill="#dcdcdc">10</text>
<line x1="1328.48" y1="486.60" x2="1328.48" y2="493.60" stroke="#d0d0d0" stroke-width="1.50"/>
<text x="1327.98" y="510.40" font-size="15.70" text-anchor="middle" textLength="16.70" lengthAdjust="spacingAndGlyphs" fill="#dcdcdc">20</text>
<line x1="1389.57" y1="486.60" x2="1389.57" y2="493.60" stroke="#d0d0d0" stroke-width="1.50"/>
<text x="1389.07" y="510.40" font-size="15.70" text-anchor="middle" textLength="16.70" lengthAdjust="spacingAndGlyphs" fill="#dcdcdc">30</text>
<line x1="1450.66" y1="486.60" x2="1450.66" y2="493.60" stroke="#d0d0d0" stroke-width="1.50"/>
<text x="1450.16" y="510.40" font-size="15.70" text-anchor="middle" textLength="16.70" lengthAdjust="spacingAndGlyphs" fill="#dcdcdc">40</text>
<line x1="1511.75" y1="486.60" x2="1511.75" y2="493.60" stroke="#d0d0d0" stroke-width="1.50"/>
<text x="1511.25" y="510.40" font-size="15.70" text-anchor="middle" textLength="16.70" lengthAdjust="spacingAndGlyphs" fill="#dcdcdc">50</text>
<line x1="1572.84" y1="486.60" x2="1572.84" y2="493.60" stroke="#d0d0d0" stroke-width="1.50"/>
<text x="1572.34" y="510.40" font-size="15.70" text-anchor="middle" textLength="16.70" lengthAdjust="spacingAndGlyphs" fill="#dcdcdc">60</text>
<line x1="1633.93" y1="486.60" x2="1633.93" y2="493.60" stroke="#d0d0d0" stroke-width="1.50"/>
<text x="1633.43" y="510.40" font-size="15.70" text-anchor="middle" textLength="16.70" lengthAdjust="spacingAndGlyphs" fill="#dcdcdc">70</text>
<line x1="1695.02" y1="486.60" x2="1695.02" y2="493.60" stroke="#d0d0d0" stroke-width="1.50"/>
<text x="1694.52" y="510.40" font-size="15.70" text-anchor="middle" textLength="16.70" lengthAdjust="spacingAndGlyphs" fill="#dcdcdc">80</text>
<line x1="1756.11" y1="486.60" x2="1756.11" y2="493.60" stroke="#d0d0d0" stroke-width="1.50"/>
<text x="1755.61" y="510.40" font-size="15.70" text-anchor="middle" textLength="16.70" lengthAdjust="spacingAndGlyphs" fill="#dcdcdc">90</text>
<line x1="1817.20" y1="486.60" x2="1817.20" y2="493.60" stroke="#d0d0d0" stroke-width="1.50"/>
<text x="1816.70" y="510.40" font-size="15.70" text-anchor="middle" textLength="25.05" lengthAdjust="spacingAndGlyphs" fill="#dcdcdc">100</text>
<text x="1438.80" y="142.60" font-size="16.20" textLength="117.81" lengthAdjust="spacingAndGlyphs" fill="#dcdcdc">Gamma Log/Log</text>
<text x="167.94" y="554.50" font-size="31.30" textLength="230.48" lengthAdjust="spacingAndGlyphs" fill="#f4f4f4">Avg dE2000: 2,4</text>
<text x="606.24" y="554.50" font-size="31.30" textLength="202.78" lengthAdjust="spacingAndGlyphs" fill="#f4f4f4">Avg CCT: 6232</text>
<text x="1031.36" y="554.50" font-size="31.30" textLength="242.40" lengthAdjust="spacingAndGlyphs" fill="#f4f4f4">Contrast Ratio: 0</text>
<text x="1463.08" y="554.50" font-size="31.30" textLength="271.03" lengthAdjust="spacingAndGlyphs" fill="#f4f4f4">Total Gamma: 2,27</text>
<rect x="76.50" y="575.30" width="1776.20" height="139.30" fill="#000000"/>
<text transform="translate(352.4,624.2) rotate(-90)" font-size="13.2" textLength="36.5" lengthAdjust="spacingAndGlyphs" fill="#ffffff">Actual</text>
<text transform="translate(352.4,685.2) rotate(-90)" font-size="13.2" textLength="36.5" lengthAdjust="spacingAndGlyphs" fill="#ffffff">Target</text>
<rect x="360.50" y="582.60" width="104.00" height="107.70" fill="none" stroke="#ffffff" stroke-width="1.5"/>
<text x="412.55" y="706.00" font-size="13.90" text-anchor="middle" textLength="7.60" lengthAdjust="spacingAndGlyphs" fill="#ffffff">0</text>
<rect x="483.28" y="635.90" width="103.50" height="54.20" fill="#1a1a1a"/>
<rect x="483.03" y="582.60" width="104.00" height="107.70" fill="none" stroke="#ffffff" stroke-width="1.5"/>
<text x="535.08" y="706.00" font-size="13.90" text-anchor="middle" textLength="15.20" lengthAdjust="spacingAndGlyphs" fill="#ffffff">10</text>
<rect x="605.81" y="635.90" width="103.50" height="54.20" fill="#333333"/>
<rect x="605.56" y="582.60" width="104.00" height="107.70" fill="none" stroke="#ffffff" stroke-width="1.5"/>
<text x="657.61" y="706.00" font-size="13.90" text-anchor="middle" textLength="15.20" lengthAdjust="spacingAndGlyphs" fill="#ffffff">20</text>
<rect x="728.34" y="635.90" width="103.50" height="54.20" fill="#4c4c4c"/>
<rect x="728.09" y="582.60" width="104.00" height="107.70" fill="none" stroke="#ffffff" stroke-width="1.5"/>
<text x="780.14" y="706.00" font-size="13.90" text-anchor="middle" textLength="15.20" lengthAdjust="spacingAndGlyphs" fill="#ffffff">30</text>
<rect x="850.87" y="635.90" width="103.50" height="54.20" fill="#666666"/>
<rect x="850.62" y="582.60" width="104.00" height="107.70" fill="none" stroke="#ffffff" stroke-width="1.5"/>
<text x="902.67" y="706.00" font-size="13.90" text-anchor="middle" textLength="15.20" lengthAdjust="spacingAndGlyphs" fill="#ffffff">40</text>
<rect x="973.40" y="635.90" width="103.50" height="54.20" fill="#808080"/>
<rect x="973.15" y="582.60" width="104.00" height="107.70" fill="none" stroke="#ffffff" stroke-width="1.5"/>
<text x="1025.20" y="706.00" font-size="13.90" text-anchor="middle" textLength="15.20" lengthAdjust="spacingAndGlyphs" fill="#ffffff">50</text>
<rect x="1095.93" y="635.90" width="103.50" height="54.20" fill="#999999"/>
<rect x="1095.68" y="582.60" width="104.00" height="107.70" fill="none" stroke="#ffffff" stroke-width="1.5"/>
<text x="1147.73" y="706.00" font-size="13.90" text-anchor="middle" textLength="15.20" lengthAdjust="spacingAndGlyphs" fill="#ffffff">60</text>
<rect x="1218.46" y="635.90" width="103.50" height="54.20" fill="#b2b2b2"/>
<rect x="1218.21" y="582.60" width="104.00" height="107.70" fill="none" stroke="#ffffff" stroke-width="1.5"/>
<text x="1270.26" y="706.00" font-size="13.90" text-anchor="middle" textLength="15.20" lengthAdjust="spacingAndGlyphs" fill="#ffffff">70</text>
<rect x="1340.99" y="635.90" width="103.50" height="54.20" fill="#cccccc"/>
<rect x="1340.74" y="582.60" width="104.00" height="107.70" fill="none" stroke="#ffffff" stroke-width="1.5"/>
<text x="1392.79" y="706.00" font-size="13.90" text-anchor="middle" textLength="15.20" lengthAdjust="spacingAndGlyphs" fill="#ffffff">80</text>
<rect x="1463.52" y="635.90" width="103.50" height="54.20" fill="#e6e6e6"/>
<rect x="1463.27" y="582.60" width="104.00" height="107.70" fill="none" stroke="#ffffff" stroke-width="1.5"/>
<text x="1515.32" y="706.00" font-size="13.90" text-anchor="middle" textLength="15.20" lengthAdjust="spacingAndGlyphs" fill="#ffffff">90</text>
<rect x="1585.05" y="581.90" width="105.50" height="109.10" fill="#fdfdfd"/>
<rect x="1585.05" y="581.90" width="105.50" height="54.10" fill="#fefcf7"/>
<text x="1637.85" y="706.00" font-size="13.90" text-anchor="middle" textLength="22.80" lengthAdjust="spacingAndGlyphs" fill="#ffffff">100</text>
<text x="90.36" y="771.00" font-size="30.80" textLength="236.72" lengthAdjust="spacingAndGlyphs" fill="#f2f2f2">Current Reading</text>
<text x="91.70" y="816.90" font-size="24.90" textLength="109.68" lengthAdjust="spacingAndGlyphs" fill="#f2f2f2">x: 0,3174</text>
<text x="91.93" y="860.30" font-size="24.90" textLength="110.85" lengthAdjust="spacingAndGlyphs" fill="#f2f2f2">y: 0,3326</text>
<text x="91.62" y="903.70" font-size="24.90" textLength="118.31" lengthAdjust="spacingAndGlyphs" fill="#f2f2f2">fL: 191,52</text>
<text x="90.81" y="947.00" font-size="24.90" textLength="156.00" lengthAdjust="spacingAndGlyphs" fill="#f2f2f2">cd/m²: 656,2</text>
<rect x="424.70" y="738.20" width="312.10" height="229.80" fill="#ffffff"/>
<rect x="432.20" y="745.30" width="296.80" height="216.70" fill="#333333"/>
<rect x="472.30" y="749.30" width="254.70" height="182.70" fill="#8c8c8c"/>
<line x1="465.00" y1="762.60" x2="472.10" y2="762.60" stroke="#d8d8d8" stroke-width="1.40"/>
<text x="464.30" y="769.00" font-size="15.70" text-anchor="end" textLength="29.15" lengthAdjust="spacingAndGlyphs" fill="#dcdcdc">0,35</text>
<line x1="465.00" y1="799.40" x2="472.10" y2="799.40" stroke="#d8d8d8" stroke-width="1.40"/>
<text x="464.30" y="805.80" font-size="15.70" text-anchor="end" textLength="29.15" lengthAdjust="spacingAndGlyphs" fill="#dcdcdc">0,34</text>
<line x1="465.00" y1="836.20" x2="472.10" y2="836.20" stroke="#d8d8d8" stroke-width="1.40"/>
<text x="464.30" y="842.60" font-size="15.70" text-anchor="end" textLength="29.15" lengthAdjust="spacingAndGlyphs" fill="#dcdcdc">0,33</text>
<line x1="465.00" y1="873.00" x2="472.10" y2="873.00" stroke="#d8d8d8" stroke-width="1.40"/>
<text x="464.30" y="879.40" font-size="15.70" text-anchor="end" textLength="29.15" lengthAdjust="spacingAndGlyphs" fill="#dcdcdc">0,32</text>
<line x1="465.00" y1="909.80" x2="472.10" y2="909.80" stroke="#d8d8d8" stroke-width="1.40"/>
<text x="464.30" y="916.20" font-size="15.70" text-anchor="end" textLength="29.15" lengthAdjust="spacingAndGlyphs" fill="#dcdcdc">0,31</text>
<line x1="482.40" y1="932.00" x2="482.40" y2="937.50" stroke="#d8d8d8" stroke-width="1.40"/>
<text x="482.40" y="954.60" font-size="15.70" text-anchor="middle" textLength="29.15" lengthAdjust="spacingAndGlyphs" fill="#dcdcdc">0,29</text>
<line x1="533.22" y1="932.00" x2="533.22" y2="937.50" stroke="#d8d8d8" stroke-width="1.40"/>
<text x="533.22" y="954.60" font-size="15.70" text-anchor="middle" textLength="20.80" lengthAdjust="spacingAndGlyphs" fill="#dcdcdc">0,3</text>
<line x1="584.04" y1="932.00" x2="584.04" y2="937.50" stroke="#d8d8d8" stroke-width="1.40"/>
<text x="584.04" y="954.60" font-size="15.70" text-anchor="middle" textLength="29.15" lengthAdjust="spacingAndGlyphs" fill="#dcdcdc">0,31</text>
<line x1="634.86" y1="932.00" x2="634.86" y2="937.50" stroke="#d8d8d8" stroke-width="1.40"/>
<text x="634.86" y="954.60" font-size="15.70" text-anchor="middle" textLength="29.15" lengthAdjust="spacingAndGlyphs" fill="#dcdcdc">0,32</text>
<line x1="685.68" y1="932.00" x2="685.68" y2="937.50" stroke="#d8d8d8" stroke-width="1.40"/>
<text x="685.68" y="954.60" font-size="15.70" text-anchor="middle" textLength="29.15" lengthAdjust="spacingAndGlyphs" fill="#dcdcdc">0,33</text>
<rect x="743.10" y="723.50" width="762.90" height="224.10" fill="#161616"/>
<rect x="744.60" y="724.50" width="760.40" height="30.10" fill="url(#gHdr)"/>
<text x="927.50" y="745.50" font-size="15.50" text-anchor="middle" textLength="8.60" lengthAdjust="spacingAndGlyphs" fill="#ffffff">0</text>
<text x="968.50" y="745.50" font-size="15.50" text-anchor="middle" textLength="17.20" lengthAdjust="spacingAndGlyphs" fill="#ffffff">10</text>
<text x="1013.75" y="745.50" font-size="15.50" text-anchor="middle" textLength="17.20" lengthAdjust="spacingAndGlyphs" fill="#ffffff">20</text>
<text x="1063.50" y="745.50" font-size="15.50" text-anchor="middle" textLength="17.20" lengthAdjust="spacingAndGlyphs" fill="#ffffff">30</text>
<text x="1113.50" y="745.50" font-size="15.50" text-anchor="middle" textLength="17.20" lengthAdjust="spacingAndGlyphs" fill="#ffffff">40</text>
<text x="1168.25" y="745.50" font-size="15.50" text-anchor="middle" textLength="17.20" lengthAdjust="spacingAndGlyphs" fill="#ffffff">50</text>
<text x="1227.65" y="745.50" font-size="15.50" text-anchor="middle" textLength="17.20" lengthAdjust="spacingAndGlyphs" fill="#ffffff">60</text>
<text x="1286.90" y="745.50" font-size="15.50" text-anchor="middle" textLength="17.20" lengthAdjust="spacingAndGlyphs" fill="#ffffff">70</text>
<text x="1346.25" y="745.50" font-size="15.50" text-anchor="middle" textLength="17.20" lengthAdjust="spacingAndGlyphs" fill="#ffffff">80</text>
<text x="1405.75" y="745.50" font-size="15.50" text-anchor="middle" textLength="17.20" lengthAdjust="spacingAndGlyphs" fill="#ffffff">90</text>
<text x="1470.25" y="745.50" font-size="15.50" text-anchor="middle" textLength="25.80" lengthAdjust="spacingAndGlyphs" fill="#ffffff">100</text>
<rect x="744.60" y="754.70" width="760.40" height="27.42" fill="#444444"/>
<text x="758.39" y="775.20" font-size="16.70" textLength="64.06" lengthAdjust="spacingAndGlyphs" font-weight="bold" fill="#ffffff">x: CIE31</text>
<text x="911.20" y="775.20" font-size="16.70" textLength="31.70" lengthAdjust="spacingAndGlyphs" fill="#f6f6f6">0,00</text>
<text x="952.20" y="775.20" font-size="16.70" textLength="31.70" lengthAdjust="spacingAndGlyphs" fill="#f6f6f6">0,00</text>
<text x="993.20" y="775.20" font-size="16.70" textLength="31.70" lengthAdjust="spacingAndGlyphs" fill="#f6f6f6">0,00</text>
<text x="1042.70" y="775.20" font-size="16.70" textLength="31.70" lengthAdjust="spacingAndGlyphs" fill="#f6f6f6">0,00</text>
<text x="1092.70" y="775.20" font-size="16.70" textLength="31.70" lengthAdjust="spacingAndGlyphs" fill="#f6f6f6">0,00</text>
<text x="1142.70" y="775.20" font-size="16.70" textLength="31.70" lengthAdjust="spacingAndGlyphs" fill="#f6f6f6">0,00</text>
<text x="1202.20" y="775.20" font-size="16.70" textLength="31.70" lengthAdjust="spacingAndGlyphs" fill="#f6f6f6">0,00</text>
<text x="1261.50" y="775.20" font-size="16.70" textLength="31.70" lengthAdjust="spacingAndGlyphs" fill="#f6f6f6">0,00</text>
<text x="1320.70" y="775.20" font-size="16.70" textLength="31.70" lengthAdjust="spacingAndGlyphs" fill="#f6f6f6">0,00</text>
<text x="1380.20" y="775.20" font-size="16.70" textLength="31.70" lengthAdjust="spacingAndGlyphs" fill="#f6f6f6">0,00</text>
<text x="1439.70" y="775.20" font-size="16.70" textLength="31.70" lengthAdjust="spacingAndGlyphs" fill="#f6f6f6">0,32</text>
<rect x="744.60" y="782.12" width="760.40" height="27.42" fill="#808080"/>
<text x="758.37" y="802.62" font-size="16.70" textLength="64.08" lengthAdjust="spacingAndGlyphs" font-weight="bold" fill="#ffffff">y: CIE31</text>
<text x="911.20" y="802.62" font-size="16.70" textLength="31.70" lengthAdjust="spacingAndGlyphs" fill="#f6f6f6">0,00</text>
<text x="952.20" y="802.62" font-size="16.70" textLength="31.70" lengthAdjust="spacingAndGlyphs" fill="#f6f6f6">0,00</text>
<text x="993.20" y="802.62" font-size="16.70" textLength="31.70" lengthAdjust="spacingAndGlyphs" fill="#f6f6f6">0,00</text>
<text x="1042.70" y="802.62" font-size="16.70" textLength="31.70" lengthAdjust="spacingAndGlyphs" fill="#f6f6f6">0,00</text>
<text x="1092.70" y="802.62" font-size="16.70" textLength="31.70" lengthAdjust="spacingAndGlyphs" fill="#f6f6f6">0,00</text>
<text x="1142.70" y="802.62" font-size="16.70" textLength="31.70" lengthAdjust="spacingAndGlyphs" fill="#f6f6f6">0,00</text>
<text x="1202.20" y="802.62" font-size="16.70" textLength="31.70" lengthAdjust="spacingAndGlyphs" fill="#f6f6f6">0,00</text>
<text x="1261.50" y="802.62" font-size="16.70" textLength="31.70" lengthAdjust="spacingAndGlyphs" fill="#f6f6f6">0,00</text>
<text x="1320.70" y="802.62" font-size="16.70" textLength="31.70" lengthAdjust="spacingAndGlyphs" fill="#f6f6f6">0,00</text>
<text x="1380.20" y="802.62" font-size="16.70" textLength="31.70" lengthAdjust="spacingAndGlyphs" fill="#f6f6f6">0,00</text>
<text x="1439.70" y="802.62" font-size="16.70" textLength="31.70" lengthAdjust="spacingAndGlyphs" fill="#f6f6f6">0,33</text>
<rect x="744.60" y="809.54" width="760.40" height="27.42" fill="#444444"/>
<text x="758.24" y="830.04" font-size="16.70" textLength="10.00" lengthAdjust="spacingAndGlyphs" font-weight="bold" fill="#ffffff">Y</text>
<text x="911.20" y="830.04" font-size="16.70" textLength="31.70" lengthAdjust="spacingAndGlyphs" fill="#f6f6f6">0,00</text>
<text x="952.20" y="830.04" font-size="16.70" textLength="31.70" lengthAdjust="spacingAndGlyphs" fill="#f6f6f6">0,00</text>
<text x="993.20" y="830.04" font-size="16.70" textLength="31.70" lengthAdjust="spacingAndGlyphs" fill="#f6f6f6">0,00</text>
<text x="1042.70" y="830.04" font-size="16.70" textLength="31.70" lengthAdjust="spacingAndGlyphs" fill="#f6f6f6">0,00</text>
<text x="1092.70" y="830.04" font-size="16.70" textLength="31.70" lengthAdjust="spacingAndGlyphs" fill="#f6f6f6">0,00</text>
<text x="1142.70" y="830.04" font-size="16.70" textLength="31.70" lengthAdjust="spacingAndGlyphs" fill="#f6f6f6">0,00</text>
<text x="1202.20" y="830.04" font-size="16.70" textLength="31.70" lengthAdjust="spacingAndGlyphs" fill="#f6f6f6">0,00</text>
<text x="1261.50" y="830.04" font-size="16.70" textLength="31.70" lengthAdjust="spacingAndGlyphs" fill="#f6f6f6">0,00</text>
<text x="1320.70" y="830.04" font-size="16.70" textLength="31.70" lengthAdjust="spacingAndGlyphs" fill="#f6f6f6">0,00</text>
<text x="1380.20" y="830.04" font-size="16.70" textLength="31.70" lengthAdjust="spacingAndGlyphs" fill="#f6f6f6">0,00</text>
<text x="1439.70" y="830.04" font-size="16.70" textLength="50.30" lengthAdjust="spacingAndGlyphs" fill="#f6f6f6">656,20</text>
<rect x="744.60" y="836.96" width="760.40" height="27.42" fill="#808080"/>
<text x="758.31" y="857.46" font-size="16.70" textLength="67.47" lengthAdjust="spacingAndGlyphs" font-weight="bold" fill="#ffffff">Target Y</text>
<text x="911.20" y="857.46" font-size="16.70" textLength="31.70" lengthAdjust="spacingAndGlyphs" fill="#f6f6f6">0,00</text>
<text x="952.20" y="857.46" font-size="16.70" textLength="31.70" lengthAdjust="spacingAndGlyphs" fill="#f6f6f6">6,78</text>
<text x="993.20" y="857.46" font-size="16.70" textLength="41.00" lengthAdjust="spacingAndGlyphs" fill="#f6f6f6">21,72</text>
<text x="1042.70" y="857.46" font-size="16.70" textLength="41.00" lengthAdjust="spacingAndGlyphs" fill="#f6f6f6">47,42</text>
<text x="1092.70" y="857.46" font-size="16.70" textLength="41.00" lengthAdjust="spacingAndGlyphs" fill="#f6f6f6">87,19</text>
<text x="1142.70" y="857.46" font-size="16.70" textLength="50.30" lengthAdjust="spacingAndGlyphs" fill="#f6f6f6">141,65</text>
<text x="1202.20" y="857.46" font-size="16.70" textLength="50.30" lengthAdjust="spacingAndGlyphs" fill="#f6f6f6">209,03</text>
<text x="1261.50" y="857.46" font-size="16.70" textLength="50.30" lengthAdjust="spacingAndGlyphs" fill="#f6f6f6">292,14</text>
<text x="1320.70" y="857.46" font-size="16.70" textLength="50.30" lengthAdjust="spacingAndGlyphs" fill="#f6f6f6">396,23</text>
<text x="1380.20" y="857.46" font-size="16.70" textLength="50.30" lengthAdjust="spacingAndGlyphs" fill="#f6f6f6">519,25</text>
<text x="1439.70" y="857.46" font-size="16.70" textLength="50.30" lengthAdjust="spacingAndGlyphs" fill="#f6f6f6">656,20</text>
<rect x="744.60" y="864.38" width="760.40" height="27.42" fill="#444444"/>
<text x="757.79" y="884.88" font-size="16.70" textLength="137.38" lengthAdjust="spacingAndGlyphs" font-weight="bold" fill="#ffffff">Gamma Log/Log</text>
<text x="911.20" y="884.88" font-size="16.70" textLength="31.70" lengthAdjust="spacingAndGlyphs" fill="#f6f6f6">0,00</text>
<text x="952.20" y="884.88" font-size="16.70" textLength="31.70" lengthAdjust="spacingAndGlyphs" fill="#f6f6f6">0,00</text>
<text x="993.20" y="884.88" font-size="16.70" textLength="31.70" lengthAdjust="spacingAndGlyphs" fill="#f6f6f6">0,00</text>
<text x="1042.70" y="884.88" font-size="16.70" textLength="31.70" lengthAdjust="spacingAndGlyphs" fill="#f6f6f6">0,00</text>
<text x="1092.70" y="884.88" font-size="16.70" textLength="31.70" lengthAdjust="spacingAndGlyphs" fill="#f6f6f6">0,00</text>
<text x="1142.70" y="884.88" font-size="16.70" textLength="31.70" lengthAdjust="spacingAndGlyphs" fill="#f6f6f6">0,00</text>
<text x="1202.20" y="884.88" font-size="16.70" textLength="31.70" lengthAdjust="spacingAndGlyphs" fill="#f6f6f6">0,00</text>
<text x="1261.50" y="884.88" font-size="16.70" textLength="31.70" lengthAdjust="spacingAndGlyphs" fill="#f6f6f6">0,00</text>
<text x="1320.70" y="884.88" font-size="16.70" textLength="31.70" lengthAdjust="spacingAndGlyphs" fill="#f6f6f6">0,00</text>
<text x="1380.20" y="884.88" font-size="16.70" textLength="31.70" lengthAdjust="spacingAndGlyphs" fill="#f6f6f6">0,00</text>
<text x="1439.70" y="884.88" font-size="16.70" textLength="31.70" lengthAdjust="spacingAndGlyphs" fill="#f6f6f6">2,27</text>
<rect x="744.60" y="891.80" width="760.40" height="27.42" fill="#808080"/>
<text x="757.87" y="912.30" font-size="16.70" textLength="31.80" lengthAdjust="spacingAndGlyphs" font-weight="bold" fill="#ffffff">CCT</text>
<text x="911.20" y="912.30" font-size="16.70" textLength="31.70" lengthAdjust="spacingAndGlyphs" fill="#f6f6f6">0,00</text>
<text x="952.20" y="912.30" font-size="16.70" textLength="31.70" lengthAdjust="spacingAndGlyphs" fill="#f6f6f6">0,00</text>
<text x="993.20" y="912.30" font-size="16.70" textLength="31.70" lengthAdjust="spacingAndGlyphs" fill="#f6f6f6">0,00</text>
<text x="1042.70" y="912.30" font-size="16.70" textLength="31.70" lengthAdjust="spacingAndGlyphs" fill="#f6f6f6">0,00</text>
<text x="1092.70" y="912.30" font-size="16.70" textLength="31.70" lengthAdjust="spacingAndGlyphs" fill="#f6f6f6">0,00</text>
<text x="1142.70" y="912.30" font-size="16.70" textLength="31.70" lengthAdjust="spacingAndGlyphs" fill="#f6f6f6">0,00</text>
<text x="1202.20" y="912.30" font-size="16.70" textLength="31.70" lengthAdjust="spacingAndGlyphs" fill="#f6f6f6">0,00</text>
<text x="1261.50" y="912.30" font-size="16.70" textLength="31.70" lengthAdjust="spacingAndGlyphs" fill="#f6f6f6">0,00</text>
<text x="1320.70" y="912.30" font-size="16.70" textLength="31.70" lengthAdjust="spacingAndGlyphs" fill="#f6f6f6">0,00</text>
<text x="1380.20" y="912.30" font-size="16.70" textLength="31.70" lengthAdjust="spacingAndGlyphs" fill="#f6f6f6">0,00</text>
<text x="1439.70" y="912.30" font-size="16.70" textLength="59.60" lengthAdjust="spacingAndGlyphs" fill="#f6f6f6">6232,00</text>
<rect x="744.60" y="919.22" width="760.40" height="27.42" fill="#444444"/>
<text x="757.80" y="939.72" font-size="16.70" textLength="67.41" lengthAdjust="spacingAndGlyphs" font-weight="bold" fill="#ffffff">ΔE 2000</text>
<text x="911.20" y="939.72" font-size="16.70" textLength="31.70" lengthAdjust="spacingAndGlyphs" fill="#f6f6f6">0,00</text>
<text x="952.20" y="939.72" font-size="16.70" textLength="31.70" lengthAdjust="spacingAndGlyphs" fill="#f6f6f6">0,00</text>
<text x="993.20" y="939.72" font-size="16.70" textLength="31.70" lengthAdjust="spacingAndGlyphs" fill="#f6f6f6">0,00</text>
<text x="1042.70" y="939.72" font-size="16.70" textLength="31.70" lengthAdjust="spacingAndGlyphs" fill="#f6f6f6">0,00</text>
<text x="1092.70" y="939.72" font-size="16.70" textLength="31.70" lengthAdjust="spacingAndGlyphs" fill="#f6f6f6">0,00</text>
<text x="1142.70" y="939.72" font-size="16.70" textLength="31.70" lengthAdjust="spacingAndGlyphs" fill="#f6f6f6">0,00</text>
<text x="1202.20" y="939.72" font-size="16.70" textLength="31.70" lengthAdjust="spacingAndGlyphs" fill="#f6f6f6">0,00</text>
<text x="1261.50" y="939.72" font-size="16.70" textLength="31.70" lengthAdjust="spacingAndGlyphs" fill="#f6f6f6">0,00</text>
<text x="1320.70" y="939.72" font-size="16.70" textLength="31.70" lengthAdjust="spacingAndGlyphs" fill="#f6f6f6">0,00</text>
<text x="1380.20" y="939.72" font-size="16.70" textLength="31.70" lengthAdjust="spacingAndGlyphs" fill="#f6f6f6">0,00</text>
<text x="1439.70" y="939.72" font-size="16.70" textLength="31.70" lengthAdjust="spacingAndGlyphs" fill="#f6f6f6">2,36</text>
<rect x="0.00" y="969.50" width="1920.00" height="70.50" fill="#303030"/>
<rect x="1.40" y="970.00" width="139.60" height="69.00" rx="5.00" fill="url(#gBB)"/>
<line x1="5.40" y1="970.80" x2="137.00" y2="970.80" stroke="#b4b4b4" stroke-width="1.20"/>
<rect x="7.00" y="975.60" width="128.40" height="40.40" rx="3.50" fill="#000000" stroke="#555555" stroke-width="1"/>
<text x="71.00" y="1034.40" font-size="10.40" text-anchor="middle" textLength="6.30" lengthAdjust="spacingAndGlyphs" font-weight="bold" fill="#262626">0</text>
<rect x="143.40" y="970.00" width="139.60" height="69.00" rx="5.00" fill="url(#gBB)"/>
<line x1="147.40" y1="970.80" x2="279.00" y2="970.80" stroke="#b4b4b4" stroke-width="1.20"/>
<rect x="149.00" y="975.60" width="128.40" height="40.40" rx="3.50" fill="#1a1a1a" stroke="#555555" stroke-width="1"/>
<text x="213.00" y="1034.40" font-size="10.40" text-anchor="middle" textLength="12.60" lengthAdjust="spacingAndGlyphs" font-weight="bold" fill="#262626">10</text>
<rect x="285.40" y="970.00" width="139.60" height="69.00" rx="5.00" fill="url(#gBB)"/>
<line x1="289.40" y1="970.80" x2="421.00" y2="970.80" stroke="#b4b4b4" stroke-width="1.20"/>
<rect x="291.00" y="975.60" width="128.40" height="40.40" rx="3.50" fill="#333333" stroke="#8a8a8a" stroke-width="1"/>
<text x="355.00" y="1034.40" font-size="10.40" text-anchor="middle" textLength="12.60" lengthAdjust="spacingAndGlyphs" font-weight="bold" fill="#262626">20</text>
<rect x="427.40" y="970.00" width="139.60" height="69.00" rx="5.00" fill="url(#gBB)"/>
<line x1="431.40" y1="970.80" x2="563.00" y2="970.80" stroke="#b4b4b4" stroke-width="1.20"/>
<rect x="433.00" y="975.60" width="128.40" height="40.40" rx="3.50" fill="#4c4c4c" stroke="#8a8a8a" stroke-width="1"/>
<text x="497.00" y="1034.40" font-size="10.40" text-anchor="middle" textLength="12.60" lengthAdjust="spacingAndGlyphs" font-weight="bold" fill="#262626">30</text>
<rect x="569.40" y="970.00" width="139.60" height="69.00" rx="5.00" fill="url(#gBB)"/>
<line x1="573.40" y1="970.80" x2="705.00" y2="970.80" stroke="#b4b4b4" stroke-width="1.20"/>
<rect x="575.00" y="975.60" width="128.40" height="40.40" rx="3.50" fill="#666666" stroke="#8a8a8a" stroke-width="1"/>
<text x="639.00" y="1034.40" font-size="10.40" text-anchor="middle" textLength="12.60" lengthAdjust="spacingAndGlyphs" font-weight="bold" fill="#262626">40</text>
<rect x="711.40" y="970.00" width="139.60" height="69.00" rx="5.00" fill="url(#gBB)"/>
<line x1="715.40" y1="970.80" x2="847.00" y2="970.80" stroke="#b4b4b4" stroke-width="1.20"/>
<rect x="717.00" y="975.60" width="128.40" height="40.40" rx="3.50" fill="#808080" stroke="#8a8a8a" stroke-width="1"/>
<text x="781.00" y="1034.40" font-size="10.40" text-anchor="middle" textLength="12.60" lengthAdjust="spacingAndGlyphs" font-weight="bold" fill="#262626">50</text>
<rect x="853.40" y="970.00" width="139.60" height="69.00" rx="5.00" fill="url(#gBB)"/>
<line x1="857.40" y1="970.80" x2="989.00" y2="970.80" stroke="#b4b4b4" stroke-width="1.20"/>
<rect x="859.00" y="975.60" width="128.40" height="40.40" rx="3.50" fill="#999999" stroke="#8a8a8a" stroke-width="1"/>
<text x="923.00" y="1034.40" font-size="10.40" text-anchor="middle" textLength="12.60" lengthAdjust="spacingAndGlyphs" font-weight="bold" fill="#262626">60</text>
<rect x="995.40" y="970.00" width="139.60" height="69.00" rx="5.00" fill="url(#gBB)"/>
<line x1="999.40" y1="970.80" x2="1131.00" y2="970.80" stroke="#b4b4b4" stroke-width="1.20"/>
<rect x="1001.00" y="975.60" width="128.40" height="40.40" rx="3.50" fill="#b2b2b2" stroke="#8a8a8a" stroke-width="1"/>
<text x="1065.00" y="1034.40" font-size="10.40" text-anchor="middle" textLength="12.60" lengthAdjust="spacingAndGlyphs" font-weight="bold" fill="#262626">70</text>
<rect x="1137.40" y="970.00" width="139.60" height="69.00" rx="5.00" fill="url(#gBB)"/>
<line x1="1141.40" y1="970.80" x2="1273.00" y2="970.80" stroke="#b4b4b4" stroke-width="1.20"/>
<rect x="1143.00" y="975.60" width="128.40" height="40.40" rx="3.50" fill="#cccccc" stroke="#8a8a8a" stroke-width="1"/>
<text x="1207.00" y="1034.40" font-size="10.40" text-anchor="middle" textLength="12.60" lengthAdjust="spacingAndGlyphs" font-weight="bold" fill="#262626">80</text>
<rect x="1279.40" y="970.00" width="139.60" height="69.00" rx="5.00" fill="url(#gBB)"/>
<line x1="1283.40" y1="970.80" x2="1415.00" y2="970.80" stroke="#b4b4b4" stroke-width="1.20"/>
<rect x="1285.00" y="975.60" width="128.40" height="40.40" rx="3.50" fill="#e6e6e6" stroke="#8a8a8a" stroke-width="1"/>
<text x="1349.00" y="1034.40" font-size="10.40" text-anchor="middle" textLength="12.60" lengthAdjust="spacingAndGlyphs" font-weight="bold" fill="#262626">90</text>
<rect x="1421.40" y="970.00" width="139.60" height="69.00" rx="5.00" fill="#222222"/>
<rect x="1427.00" y="975.60" width="128.40" height="40.40" rx="3.50" fill="#ffffff" stroke="#ffffff" stroke-width="1"/>
<text x="1491.00" y="1034.40" font-size="10.40" text-anchor="middle" textLength="18.90" lengthAdjust="spacingAndGlyphs" font-weight="bold" fill="#ffffff">100</text>
<rect x="1564.40" y="970.00" width="54.80" height="72.00" rx="5.00" fill="url(#gBB2)"/>
<line x1="1565.00" y1="990.30" x2="1619.00" y2="990.30" stroke="#4e4e4e" stroke-width="1.40"/>
<line x1="1565.00" y1="991.50" x2="1619.00" y2="991.50" stroke="#a2a2a2" stroke-width="1.00"/>
<circle cx="1591.5" cy="980" r="8.6" fill="url(#gBBc)"/>
<path d="M1586.3,982.5 L1591.5,976.3 L1596.7,982.5Z" fill="#333333"/>
<rect x="1575.60" y="998.70" width="31.80" height="31.60" rx="4.00" fill="url(#gSq)" stroke="#222222" stroke-width="2.6"/>
<rect x="1584.00" y="1007.80" width="15.00" height="14.80" fill="#0a0a0a"/>
<rect x="1584.00" y="1007.80" width="15.00" height="7.00" fill="#222222"/>
<rect x="1620.00" y="970.00" width="52.30" height="33.50" fill="url(#gBB2)"/>
<circle cx="1646.2" cy="987" r="10.8" fill="url(#gBBc)"/>
<rect x="1672.30" y="970.00" width="50.70" height="33.50" fill="url(#gBB2)"/>
<line x1="1672.30" y1="970.00" x2="1672.30" y2="1003.50" stroke="#383838" stroke-width="1.20"/>
<circle cx="1697.7" cy="987" r="10.8" fill="url(#gBBc)"/>
<rect x="1723.00" y="970.00" width="51.40" height="33.50" fill="url(#gBB2)"/>
<line x1="1723.00" y1="970.00" x2="1723.00" y2="1003.50" stroke="#383838" stroke-width="1.20"/>
<circle cx="1748.7" cy="987" r="10.8" fill="url(#gBBc)"/>
<rect x="1774.40" y="970.00" width="50.60" height="33.50" fill="url(#gBB2)"/>
<line x1="1774.40" y1="970.00" x2="1774.40" y2="1003.50" stroke="#383838" stroke-width="1.20"/>
<circle cx="1799.7" cy="987" r="10.8" fill="url(#gBBc)"/>
<rect x="1825.00" y="970.00" width="51.00" height="33.50" fill="url(#gBB2)"/>
<line x1="1825.00" y1="970.00" x2="1825.00" y2="1003.50" stroke="#383838" stroke-width="1.20"/>
<circle cx="1850.5" cy="987" r="10.8" fill="url(#gBBc)"/>
<rect x="1641.90" y="982.50" width="8.80" height="8.60" fill="#383838"/>
<path d="M1695,982.2 L1704.2,987.4 L1695,992.8Z" fill="#383838"/>
<path d="M1745.6,981.8 h-2.6 v10.6 h2.6 M1752,981.8 h2.6 v10.6 h-2.6" fill="none" stroke="#383838" stroke-width="2.2"/>
<circle cx="1747.3" cy="987.1" r="1.15" fill="#383838"/><circle cx="1750.3" cy="987.1" r="1.15" fill="#383838"/>
<path d="M1799.6,987 C1797.6,983.6 1793.2,983.6 1793.2,987 C1793.2,990.4 1797.6,990.4 1799.6,987 C1801.6,983.6 1806,983.6 1806,987 C1806,990.4 1801.6,990.4 1799.6,987Z" fill="none" stroke="#383838" stroke-width="1.8"/>
<path d="M1845.6,986.2 A5.2,5.2 0 0 1 1854.6,983.6 M1855.6,987.8 A5.2,5.2 0 0 1 1846.6,990.4" fill="none" stroke="#383838" stroke-width="2.6"/>
<path d="M1857,980.8 v5 h-5Z M1844.2,993.2 v-5 h5Z" fill="#383838"/>
<rect x="1876.00" y="970.00" width="44.00" height="33.50" fill="url(#gBBd)"/>
<circle cx="1901.9" cy="987" r="10.8" fill="#3e3e3e"/>
<rect x="1620.00" y="1004.80" width="154.40" height="36.00" fill="url(#gBB2)"/>
<rect x="1774.40" y="1004.80" width="146.00" height="36.00" fill="url(#gBB2)"/>
<line x1="1620.00" y1="1004.20" x2="1920.00" y2="1004.20" stroke="#3a3a3a" stroke-width="1.40"/>
<line x1="1620.00" y1="1005.60" x2="1920.00" y2="1005.60" stroke="#b0b0b0" stroke-width="1.00"/>
<line x1="1774.40" y1="1005.00" x2="1774.40" y2="1040.00" stroke="#383838" stroke-width="1.20"/>
<circle cx="1654.8" cy="1022" r="10.8" fill="url(#gBBc)"/>
<path d="M1654.6,1016.8 l-4.4,5.2 l4.4,5.2 M1659.6,1016.8 l-4.4,5.2 l4.4,5.2" fill="none" stroke="#383838" stroke-width="1.5"/>
<circle cx="1895.6" cy="1022" r="10.8" fill="url(#gBBc)"/>
<path d="M1891.6,1016.8 l4.4,5.2 l-4.4,5.2 M1896.6,1016.8 l4.4,5.2 l-4.4,5.2" fill="none" stroke="#383838" stroke-width="1.5"/>
<text x="1683.44" y="1030.60" font-size="24.60" textLength="58.42" lengthAdjust="spacingAndGlyphs" fill="#343434" stroke="#343434" stroke-width="0.6">Back</text>
<text x="1803.90" y="1030.60" font-size="24.60" textLength="60.11" lengthAdjust="spacingAndGlyphs" fill="#343434" stroke="#343434" stroke-width="0.6">Next</text>
<line x1="0.00" y1="1039.60" x2="1920.00" y2="1039.60" stroke="#2a2a2a" stroke-width="1.00"/>
</svg>
<div id="cie"></div>
<svg id="over" width="1920" height="1040" viewBox="0 0 1920 1040">
<clipPath id="cpC"><rect x="473.3" y="750.3" width="252.7" height="180.7"/></clipPath>
<path d="M467,962.4 L486.5,946.4 C494,940.4 501,934.6 508.8,928.5 C528,913.6 546.6,899.4 565.7,885.4 C577.6,876.6 589.6,868 601.8,859.5 C616.2,849.5 630.8,839.7 645.5,830 C663,818.5 680.6,807.2 698.4,796 C719.6,782.8 741,770.2 762.4,757.7" fill="none" stroke="#000" stroke-width="3.2" clip-path="url(#cpC)"/>
<rect x="591.8" y="832.9" width="13.4" height="13.6" fill="#ffffff" stroke="#000" stroke-width="1.8"/>
<circle cx="621.4" cy="827" r="4.3" fill="#ffffff" stroke="#000" stroke-width="1.4"/>
</svg>
</body></html>
